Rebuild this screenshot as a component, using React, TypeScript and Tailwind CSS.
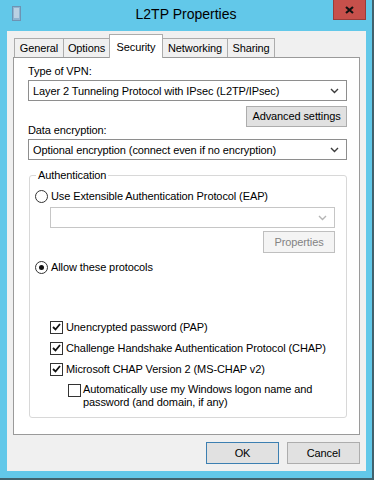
import React from "react";

const Chevron = ({ disabled }: { disabled?: boolean }) => (
  <svg width="9" height="6" viewBox="0 0 9 6" className="shrink-0">
    <path
      d="M1 1l3.5 3.5L8 1"
      fill="none"
      stroke={disabled ? "#b5b5b5" : "#3c3c3c"}
      strokeWidth="1.4"
    />
  </svg>
);

const Select = ({
  value,
  disabled,
  className = "",
}: {
  value?: string;
  disabled?: boolean;
  className?: string;
}) => (
  <div
    className={`flex h-[21px] items-center justify-between border pl-[4px] pr-[7px] ${
      disabled ? "border-[#c6c6c6] bg-white" : "border-[#8e8e8e] bg-white"
    } ${className}`}
  >
    <span className="leading-[14px]">{value}</span>
    <Chevron disabled={disabled} />
  </div>
);

const Radio = ({ checked }: { checked?: boolean }) => (
  <span className="flex h-[13px] w-[13px] shrink-0 items-center justify-center rounded-full border border-[#333] bg-white">
    {checked && <span className="h-[5px] w-[5px] rounded-full bg-[#111]" />}
  </span>
);

const Check = ({ checked }: { checked?: boolean }) => (
  <span className="flex h-[13px] w-[13px] shrink-0 items-center justify-center border border-[#333] bg-white">
    {checked && (
      <svg width="9" height="8" viewBox="0 0 9 8">
        <path d="M1 4l2.5 2.5L8 1" fill="none" stroke="#111" strokeWidth="1.8" />
      </svg>
    )}
  </span>
);

const tabs = [
  { label: "General", w: "w-[50px]" },
  { label: "Options", w: "w-[47px]" },
  { label: "Security", w: "w-[54px]", active: true },
  { label: "Networking", w: "w-[66px]" },
  { label: "Sharing", w: "w-[48px]" },
];

const protocols = [
  "Unencrypted password (PAP)",
  "Challenge Handshake Authentication Protocol (CHAP)",
  "Microsoft CHAP Version 2 (MS-CHAP v2)",
];

export default function App() {
  return (
    <div className="flex h-[480px] w-[374px] flex-col border-r-2 border-b-2 border-[#41626d] bg-[#62c8e9] font-['Liberation_Sans',Arial,sans-serif] text-[11px] tracking-[-0.1px] text-black">
      {/* Title bar */}
      <div className="relative flex h-[31px] shrink-0 items-center justify-center">
        <svg
          width="9"
          height="15"
          viewBox="0 0 9 15"
          className="absolute left-[12px] top-[6px]"
        >
          <rect x="0.5" y="0.5" width="8" height="14" fill="#8fb4d0" stroke="#6d93b3" />
          <path d="M2 3h5M2 5h5M2 7h5M2 9h5M2 11h5" stroke="#e4eef6" strokeWidth="1" />
        </svg>
        <span className="pb-[2px] text-[14px] tracking-normal">L2TP Properties</span>
        <div className="absolute right-[6px] top-0 flex h-[20px] w-[33px] items-center justify-center border border-t-0 border-[#9a3c38] bg-[#c7504b]">
          <svg width="9" height="8" viewBox="0 0 9 8">
            <path d="M1 1l7 6M8 1L1 7" stroke="#111" strokeWidth="2.2" />
          </svg>
        </div>
      </div>

      {/* Client area */}
      <div className="ml-[7px] flex h-[440px] w-[359px] flex-col bg-[#f0f0f0] px-[6px]">
        {/* Tabs */}
        <div className="mt-[3px] flex h-[23px] items-end pl-[1px]">
          {tabs.map((t) =>
            t.active ? (
              <div
                key={t.label}
                className={`relative z-10 -mb-px -ml-px flex h-[24px] ${t.w} items-start justify-center border border-b-0 border-[#acacac] bg-white pt-[4px]`}
              >
                {t.label}
              </div>
            ) : (
              <div
                key={t.label}
                className={`-ml-px flex h-[19px] ${t.w} items-center justify-center border border-b-0 border-[#acacac] bg-[#f0f0f0] first:ml-0`}
              >
                {t.label}
              </div>
            )
          )}
        </div>

        {/* Panel */}
        <div className="flex h-[378px] flex-col border border-[#9a9a9a] bg-white pl-[14px] pt-[6px]">
          <div className="leading-[14px]">Type of VPN:</div>
          <Select
            className="mt-[2px] w-[319px]"
            value="Layer 2 Tunneling Protocol with IPsec (L2TP/IPsec)"
          />
          <div className="flex w-[319px] justify-end">
            <button className="mt-[5px] flex h-[21px] w-[101px] items-center justify-center border border-[#adadad] bg-[#e1e1e1]">
              Advanced settings
            </button>
          </div>
          <div className="-mt-[4px] leading-[14px]">Data encryption:</div>
          <Select
            className="mt-[2px] w-[319px]"
            value="Optional encryption (connect even if no encryption)"
          />

          <fieldset className="ml-px mt-[8px] w-[318px] rounded-[3px] border border-[#d8d8d8]">
            <legend className="ml-[6px] px-[2px] leading-[14px]">Authentication</legend>
            <div className="flex flex-col pl-[5px] pr-[11px] pb-[8px] pt-[6px]">
              <div className="flex h-[16px] items-center gap-[3px]">
                <Radio />
                <span className="leading-[14px]">Use Extensible Authentication Protocol (EAP)</span>
              </div>
              <Select disabled className="ml-[15px] mt-[3px]" />
              <button className="mt-[3px] flex h-[22px] w-[72px] items-center justify-center self-end border border-[#bfbfbf] bg-[#f4f4f4] text-[#838383]">
                Properties
              </button>
              <div className="mt-[6px] flex h-[16px] items-center gap-[3px]">
                <Radio checked />
                <span className="leading-[14px]">Allow these protocols</span>
              </div>

              <div className="mt-[44px] flex flex-col gap-[5px] pl-[15px]">
                {protocols.map((p) => (
                  <div key={p} className="flex h-[16px] items-center gap-[3px]">
                    <Check checked />
                    <span className="leading-[14px]">{p}</span>
                  </div>
                ))}
              </div>
              <div className="ml-[33px] mt-[6px] flex items-start gap-[2px]">
                <span className="mt-px">
                  <Check />
                </span>
                <span className="leading-[13px]">
                  Automatically use my Windows logon name and
                  <br />
                  password (and domain, if any)
                </span>
              </div>
            </div>
          </fieldset>
        </div>

        {/* Dialog buttons */}
        <div className="mt-[7px] flex justify-end gap-[8px]">
          <button className="flex h-[22px] w-[73px] items-center justify-center border border-[#3c7fb1] bg-[#e1e1e1]">
            OK
          </button>
          <button className="flex h-[22px] w-[73px] items-center justify-center border border-[#adadad] bg-[#e1e1e1]">
            Cancel
          </button>
        </div>
      </div>
    </div>
  );
}
